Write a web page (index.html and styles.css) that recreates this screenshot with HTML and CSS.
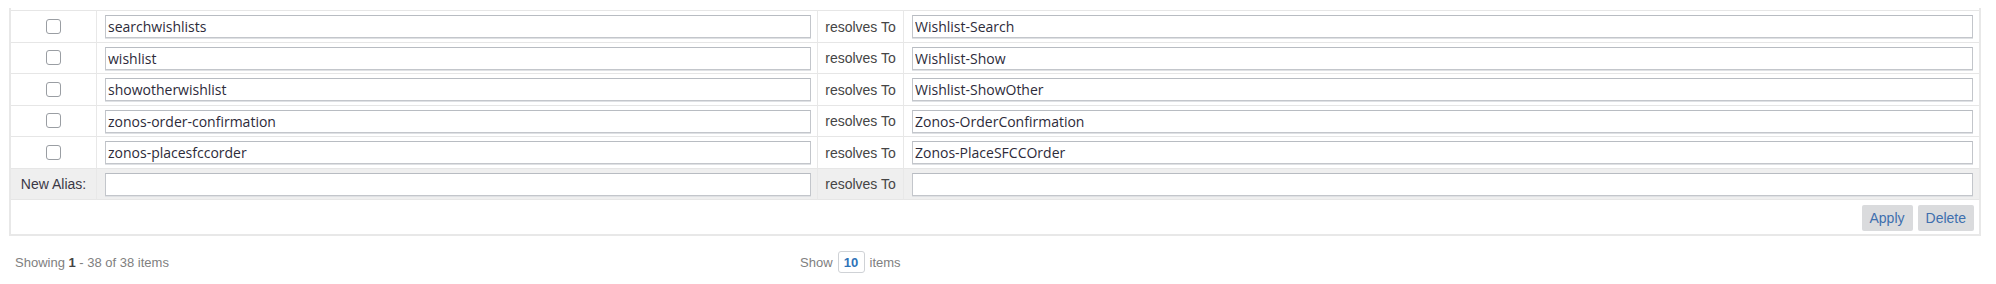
FILE: index.html
```html
<!DOCTYPE html>
<html>
<head>
<meta charset="utf-8">
<link rel="stylesheet" href="styles.css">
</head>
<body>
<div class="grid-wrap">
  <table class="alias-table">
    <colgroup>
      <col class="c-check">
      <col class="c-alias">
      <col class="c-res">
      <col class="c-path">
    </colgroup>
    <tbody>
      <tr>
        <td class="cell-check"><span class="cb"></span></td>
        <td class="cell-input"><input class="txt" type="text" value="searchwishlists"></td>
        <td class="cell-label">resolves To</td>
        <td class="cell-input"><input class="txt" type="text" value="Wishlist-Search"></td>
      </tr>
      <tr class="row-short">
        <td class="cell-check"><span class="cb"></span></td>
        <td class="cell-input"><input class="txt" type="text" value="wishlist"></td>
        <td class="cell-label">resolves To</td>
        <td class="cell-input"><input class="txt" type="text" value="Wishlist-Show"></td>
      </tr>
      <tr>
        <td class="cell-check"><span class="cb"></span></td>
        <td class="cell-input"><input class="txt" type="text" value="showotherwishlist"></td>
        <td class="cell-label">resolves To</td>
        <td class="cell-input"><input class="txt" type="text" value="Wishlist-ShowOther"></td>
      </tr>
      <tr class="row-short">
        <td class="cell-check"><span class="cb"></span></td>
        <td class="cell-input"><input class="txt" type="text" value="zonos-order-confirmation"></td>
        <td class="cell-label">resolves To</td>
        <td class="cell-input"><input class="txt" type="text" value="Zonos-OrderConfirmation"></td>
      </tr>
      <tr>
        <td class="cell-check"><span class="cb"></span></td>
        <td class="cell-input"><input class="txt" type="text" value="zonos-placesfccorder"></td>
        <td class="cell-label">resolves To</td>
        <td class="cell-input"><input class="txt" type="text" value="Zonos-PlaceSFCCOrder"></td>
      </tr>
      <tr class="row-new row-short">
        <td class="cell-check new-label">New Alias:</td>
        <td class="cell-input"><input class="txt" type="text" value=""></td>
        <td class="cell-label">resolves To</td>
        <td class="cell-input"><input class="txt" type="text" value=""></td>
      </tr>
    </tbody>
  </table>
  <div class="actions">
    <button class="btn" type="button">Apply</button>
    <button class="btn" type="button">Delete</button>
  </div>
</div>
<div class="pager">
  <div class="pager-info">Showing <b>1</b> - 38 of 38 items</div>
  <div class="pager-size">Show <span class="size-box">10</span> items</div>
</div>
</body>
</html>
```
FILE: styles.css
```css
html, body {
  margin: 0;
  padding: 0;
  background: #ffffff;
}

body {
  font-family: "Liberation Sans", Arial, sans-serif;
  width: 1996px;
  height: 284px;
  overflow: hidden;
}

.grid-wrap {
  margin: 8px 15px 0 9px;
  padding-top: 2px;
  border-left: 2px solid #e8e8e8;
  border-right: 2px solid #e8e8e8;
  border-bottom: 2px solid #e8e8e8;
}

.alias-table {
  width: 100%;
  table-layout: fixed;
  border-collapse: separate;
  border-spacing: 0;
}

.c-check { width: 86px; }
.c-alias { width: 721px; }
.c-res { width: 86px; }
.c-path { width: auto; }

.alias-table td {
  padding: 0;
  border-bottom: 1px solid #e6e6e6;
  border-right: 1px solid #e8e8e8;
  vertical-align: middle;
}

.alias-table tr:first-child td {
  border-top: 1px solid #e6e6e6;
}

.alias-table td:last-child {
  border-right: none;
}

.cell-check {
  text-align: center;
}

.cb {
  display: inline-block;
  width: 13px;
  height: 13px;
  border: 1px solid #9a9ea3;
  border-radius: 3px;
  background: #fff;
  vertical-align: middle;
  position: relative;
  top: -1px;
}

.alias-table .cell-input {
  padding: 4px 6px 4px 8px;
}

.alias-table .row-short .cell-input {
  padding-bottom: 3px;
}

.txt {
  display: block;
  width: 100%;
  height: 23px;
  box-sizing: border-box;
  margin: 0;
  padding: 0 2px;
  border: 1px solid #c3c6cb;
  border-top-color: #b8bcc2;
  box-shadow: 0 1px 0 #dfe1e4;
  background: #fff;
  font-family: "Open Sans", "Liberation Sans", sans-serif;
  font-size: 14px;
  color: #2d2b3a;
  outline: none;
}

.cell-label {
  text-align: center;
  font-size: 14px;
  color: #454545;
  white-space: nowrap;
}

.row-new td {
  background: #efefef;
}

.new-label {
  font-size: 14px;
  color: #3b3846;
}

.actions {
  display: flex;
  justify-content: flex-end;
  gap: 5px;
  padding: 5px 5px 3px 0;
}

.btn {
  height: 26px;
  margin: 0;
  padding: 0 8px;
  border: none;
  border-radius: 2px;
  background: #dadbdd;
  font-family: "Liberation Sans", Arial, sans-serif;
  font-size: 14px;
  color: #3e6fae;
}

.pager {
  display: grid;
  grid-template-columns: 791px 1fr;
  align-items: center;
  margin: 15px 15px 0 9px;
  font-size: 13px;
  color: #808080;
}

.pager-info {
  padding-left: 6px;
}

.pager-info b {
  color: #444;
}

.pager-size {
  display: flex;
  align-items: center;
  gap: 5px;
}

.size-box {
  display: inline-flex;
  align-items: center;
  justify-content: center;
  width: 27px;
  height: 22px;
  box-sizing: border-box;
  border: 1px solid #cfd2d6;
  border-radius: 3px;
  color: #2e73b8;
  font-weight: bold;
}
```
